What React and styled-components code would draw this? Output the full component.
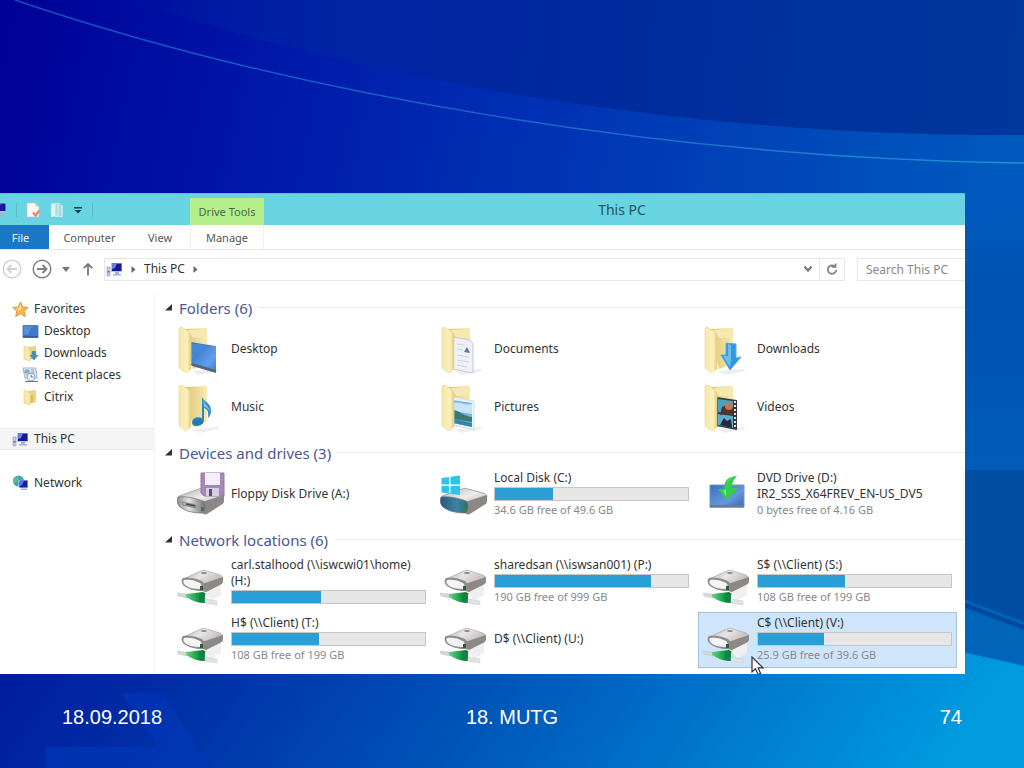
import React from 'react';
import styled, { createGlobalStyle, css } from 'styled-components';

const GlobalStyle = createGlobalStyle`
  * {
    box-sizing: border-box;
  }
  body {
    margin: 0;
    background: #0038b0;
  }
  button, input {
    font: inherit;
    color: inherit;
  }
`;

const favorites = [
  { name: 'Desktop', icon: 'desktop' },
  { name: 'Downloads', icon: 'downloads' },
  { name: 'Recent places', icon: 'recent' },
  { name: 'Citrix', icon: 'folder' },
];

const groups = [
  {
    title: 'Folders (6)',
    items: [
      { name: 'Desktop', icon: 'desktop' },
      { name: 'Documents', icon: 'documents' },
      { name: 'Downloads', icon: 'downloads' },
      { name: 'Music', icon: 'music' },
      { name: 'Pictures', icon: 'pictures' },
      { name: 'Videos', icon: 'videos' },
    ],
  },
  {
    title: 'Devices and drives (3)',
    items: [
      { name: 'Floppy Disk Drive (A:)', icon: 'floppy' },
      { name: 'Local Disk (C:)', icon: 'local', used: 30, free: '34.6 GB free of 49.6 GB' },
      { name: 'DVD Drive (D:)', icon: 'dvd', second: 'IR2_SSS_X64FREV_EN-US_DV5', free: '0 bytes free of 4.16 GB' },
    ],
  },
  {
    title: 'Network locations (6)',
    items: [
      { name: 'carl.stalhood (\\\\iswcwi01\\home)', second: '(H:)', icon: 'network', used: 46 },
      { name: 'sharedsan (\\\\iswsan001) (P:)', icon: 'network', used: 81, free: '190 GB free of 999 GB' },
      { name: 'S$ (\\\\Client) (S:)', icon: 'network', used: 45, free: '108 GB free of 199 GB' },
      { name: 'H$ (\\\\Client) (T:)', icon: 'network', used: 45, free: '108 GB free of 199 GB' },
      { name: 'D$ (\\\\Client) (U:)', icon: 'network' },
      { name: 'C$ (\\\\Client) (V:)', icon: 'network', used: 34, free: '25.9 GB free of 39.6 GB', selected: true },
    ],
  },
];

export default function App() {
  return (
    <Slide>
      <GlobalStyle />
      <Backdrop />
      <Explorer>
        <TitleBar>
          <QuickAccess>
            <PcIcon />
            <Divider />
            <QuickButton aria-label="Properties">
              <PageIcon />
            </QuickButton>
            <QuickButton aria-label="New folder">
              <NewFolderIcon />
            </QuickButton>
            <QuickButton aria-label="Customize toolbar">
              <svg width="10" height="10" viewBox="0 0 10 10">
                <path d="M1 2h8v1.4H1zM1.5 5h7L5 8.6z" fill="#1c3c44" />
              </svg>
            </QuickButton>
            <Divider />
          </QuickAccess>
          <ToolsLabel>Drive Tools</ToolsLabel>
          <WindowTitle>This PC</WindowTitle>
        </TitleBar>
        <Ribbon>
          <FileTab>File</FileTab>
          <Tab $width={81}>Computer</Tab>
          <Tab $width={60}>View</Tab>
          <ToolTab>Manage</ToolTab>
        </Ribbon>
        <AddressRow>
          <NavButton aria-label="Back" disabled>
            <ArrowCircle color="#d2d2d2" flip />
          </NavButton>
          <NavButton aria-label="Forward">
            <ArrowCircle color="#808080" />
          </NavButton>
          <NavButton aria-label="Recent locations">
            <svg width="8" height="5" viewBox="0 0 8 5">
              <path d="M0 0h8L4 5z" fill="#777" />
            </svg>
          </NavButton>
          <NavButton aria-label="Up">
            <svg width="14" height="14" viewBox="0 0 14 14" fill="none" stroke="#777" strokeWidth="1.8">
              <path d="M8 13.500V2M3.800 6.200L8 2l4.200 4.200" />
            </svg>
          </NavButton>
          <AddressBox>
            <PcIcon />
            <Chevron />
            <Crumb href="#this-pc">This PC</Crumb>
            <Chevron />
            <AddressButton aria-label="Previous locations" $push>
              <svg width="10" height="8" viewBox="0 0 10 8" fill="none" stroke="#777" strokeWidth="2.200">
                <path d="M1.500 1.500L5 5.500l3.500-4" />
              </svg>
            </AddressButton>
            <AddressButton aria-label="Refresh" $line>
              <svg width="12" height="13" viewBox="0 0 12 13" fill="none" stroke="#888" strokeWidth="1.900">
                <path d="M8.500 3.200A4.200 4.200 0 1 0 10.200 7" />
                <path d="M5.500 3.800h4V.500" />
              </svg>
            </AddressButton>
          </AddressBox>
          <Search type="search" aria-label="Search This PC" placeholder="Search This PC" />
        </AddressRow>
        <Body>
          <Sidebar>
            <SideLink href="#favorites">
              <StarIcon />
              Favorites
            </SideLink>
            {favorites.map((item) => (
              <SideLink key={item.name} href="#favorites" $child>
                <SmallIcon name={item.icon} />
                {item.name}
              </SideLink>
            ))}
            <SideLink href="#this-pc" $current>
              <PcIcon />
              This PC
            </SideLink>
            <SideLink href="#network">
              <GlobeIcon />
              Network
            </SideLink>
          </Sidebar>
          <Content>
            {groups.map((group) => (
              <section key={group.title}>
                <GroupTitle>
                  <svg width="7" height="7" viewBox="0 0 7 7">
                    <path d="M7 0v6.500H0z" fill="#333" />
                  </svg>
                  {group.title}
                </GroupTitle>
                <Tiles>
                  {group.items.map((item) => (
                    <DriveTile key={item.name} item={item} />
                  ))}
                </Tiles>
              </section>
            ))}
          </Content>
        </Body>
      </Explorer>
      <Footer>
        <span>18.09.2018</span>
        <span>18. MUTG</span>
        <span>74</span>
      </Footer>
    </Slide>
  );
}

function DriveTile({ item }) {
  return (
    <Tile $selected={item.selected}>
      <TileIcon name={item.icon} />
      <TileText>
        <TileLine>{item.name}</TileLine>
        {item.second && <TileLine>{item.second}</TileLine>}
        {item.used && (
          <Meter role="progressbar" aria-label="Space used" aria-valuenow={item.used}>
            <MeterFill style={{ width: `${item.used}%` }} />
          </Meter>
        )}
        {item.free && <TileLine $muted>{item.free}</TileLine>}
      </TileText>
      {item.selected && (
        <Pointer width="14" height="20" viewBox="0 0 14 20">
          <path d="M1 1v15l3.500-3.200L7 18.500l2.600-1.100-2.500-5.600H12z" fill="#fff" stroke="#333" strokeWidth="1.200" />
        </Pointer>
      )}
    </Tile>
  );
}

function Backdrop() {
  return (
    <BackdropSvg viewBox="0 0 1024 768" preserveAspectRatio="none" aria-hidden="true">
      <defs>
        <linearGradient id="base" x1="0" y1="0" x2="1" y2="0.150">
          <stop offset="0" stopColor="#000096" />
          <stop offset="0.250" stopColor="#0016a8" />
          <stop offset="0.550" stopColor="#0032b4" />
          <stop offset="1" stopColor="#005abe" />
        </linearGradient>
        <linearGradient id="shade" gradientUnits="userSpaceOnUse" x1="130" y1="0" x2="1024" y2="60">
          <stop offset="0" stopColor="#0028a0" stopOpacity="0" />
          <stop offset="0.300" stopColor="#0024a2" />
          <stop offset="0.600" stopColor="#002c9c" />
          <stop offset="1" stopColor="#00389c" />
        </linearGradient>
        <linearGradient id="floor" x1="0" y1="0" x2="1" y2="0.080">
          <stop offset="0" stopColor="#001b9e" />
          <stop offset="0.200" stopColor="#002ea6" />
          <stop offset="0.500" stopColor="#0054b8" />
          <stop offset="0.750" stopColor="#0078cc" />
          <stop offset="1" stopColor="#009ce0" />
        </linearGradient>
        <linearGradient id="line" x1="0" y1="0" x2="1" y2="0">
          <stop offset="0" stopColor="#1450c0" />
          <stop offset="0.600" stopColor="#1c6cca" />
          <stop offset="1" stopColor="#1c94d0" />
        </linearGradient>
        <linearGradient id="edge" x1="0" y1="0" x2="0" y2="1">
          <stop offset="0" stopColor="#005abc" />
          <stop offset="0.300" stopColor="#0052b0" />
          <stop offset="1" stopColor="#005cb8" />
        </linearGradient>
      </defs>
      <path d="M0 0h1024v768H0z" fill="url(#base)" />
      <path d="M130 0C350 75 680 138 1024 135V0z" fill="url(#shade)" />
      <path d="M15 0C280 90 650 158 1024 163" fill="none" stroke="url(#line)" strokeWidth="1.500" />
      <path d="M950 216h74v254h-74z" fill="url(#edge)" />
      <path d="M950 470h74v170h-74z" fill="#004da4" />
      <path d="M950 594l74 28v60h-74z" fill="#0064b8" />
      <path d="M950 597l74 28v5l-74-28z" fill="#0047a0" />
      <path d="M0 665h850l100-16 74 17v102H0z" fill="url(#floor)" />
      <path d="M121 693h42l47 75H46v-21h113z" fill="#0036b8" opacity="0.700" />
    </BackdropSvg>
  );
}

function ArrowCircle({ color, flip }) {
  return (
    <svg width="20" height="20" viewBox="0 0 20 20" fill="none" stroke={color}>
      <circle cx="10" cy="10" r="8.800" strokeWidth="1.500" />
      <path
        d={flip ? 'M15 10H6M9.500 6L5.500 10l4 4' : 'M5 10h9M10.500 6l4 4-4 4'}
        strokeWidth="2"
      />
    </svg>
  );
}

function Chevron() {
  return (
    <svg width="5" height="7" viewBox="0 0 5 7">
      <path d="M0.500 0v7L4.500 3.500z" fill="#666" />
    </svg>
  );
}

function PcIcon() {
  return (
    <svg width="17" height="15" viewBox="0 0 17 15">
      <path d="M1 5h3v9H1z" fill="#c3cce0" stroke="#8c98b8" strokeWidth="0.600" />
      <path d="M1.500 9h2v1.500h-2z" fill="#5b6c98" />
      <path d="M5 1h11v9H5z" fill="#b9c3e4" />
      <path d="M6 1.500h9.500V9H6z" fill="#17189c" />
      <path d="M6 1.500h5L9 6 6 7z" fill="#6d82dc" />
      <path d="M9 10h4v2h2v1.500H7V12h2z" fill="#a3b4d4" />
    </svg>
  );
}

function PageIcon() {
  return (
    <svg width="15" height="16" viewBox="0 0 15 16">
      <path d="M1 1h8l4 4v10H1z" fill="#fcf7f4" stroke="#b9c6c8" strokeWidth="0.700" />
      <path d="M9 1v4h4" fill="#d8dde0" />
      <path d="M7 10.500l2.500 3 4-5" fill="none" stroke="#e08c72" strokeWidth="2.500" />
    </svg>
  );
}

function NewFolderIcon() {
  return (
    <svg width="14" height="16" viewBox="0 0 14 16">
      <path d="M1 2l5-1v13l-5 1z" fill="#e3f3f4" />
      <path d="M6 1h4l3 3v11H4l2-2z" fill="#bfe6ea" />
      <path d="M6 2v11M10 2v12" stroke="#94cbd3" />
    </svg>
  );
}

function StarIcon() {
  return (
    <svg width="17" height="17" viewBox="0 0 17 17">
      <path
        d="M8.500 1l2.200 5 5.400.500-4 3.600 1.200 5.400-4.800-2.800-4.800 2.800 1.200-5.400-4-3.600 5.400-.500z"
        fill="#f8b84a"
        stroke="#e4943a"
      />
      <path d="M8.500 3l1 4-4 4 .500-3L4 7.500l3-.500z" fill="#fde09a" />
    </svg>
  );
}

function GlobeIcon() {
  return (
    <svg width="17" height="16" viewBox="0 0 17 16">
      <circle cx="6.500" cy="6" r="5.500" fill="#3a9ed0" />
      <path d="M2 3l4-2 1 3-3 4-3-1zM7 8l3-5 1.500 3L9 10z" fill="#5dc07a" />
      <path d="M6.500 5H16v8H6.500z" fill="#d3dcf0" />
      <path d="M7.500 5.500h8v7h-8z" fill="#171ea4" />
      <path d="M8 6h4l-2 4-2 1z" fill="#5578dc" />
      <path d="M9 13.500h6V15H9z" fill="#9eb0d0" />
    </svg>
  );
}

function SmallIcon({ name }) {
  if (name === 'desktop') {
    return (
      <svg width="17" height="15" viewBox="0 0 17 15">
        <path d="M1 1.500h15v12H1z" fill="#3c78cc" stroke="#5a80b8" />
        <path d="M2 2.500h8l-4 8H2z" fill="#5492dc" />
        <path d="M1 12h15v1.500H1z" fill="#345c94" />
      </svg>
    );
  }
  if (name === 'recent') {
    return (
      <svg width="17" height="16" viewBox="0 0 17 16">
        <path d="M1 1h13l1 10H3z" fill="#e1e9f0" stroke="#a3b5c7" />
        <path d="M3 3h4v3H3zM9 3h3M9 5h4M4 8h3" fill="#84aaca" stroke="#84a5c4" />
        <circle cx="9" cy="10" r="4" fill="#edf3f8" stroke="#8ca3ba" />
        <path d="M9 7.500V10h2.500M3 14.500h13" fill="none" stroke="#657e98" />
      </svg>
    );
  }
  return (
    <svg width="17" height="16" viewBox="0 0 17 16">
      <path d="M5 2l9-1v12l-8 2z" fill="#ecd380" />
      <path d="M2 1l6 3v12l-6-2z" fill="#f8e9a6" stroke="#e0cb80" strokeWidth="0.600" />
      <path d="M9 7l2-1v7l-2 1z" fill="#d9b955" />
      {name === 'downloads' && <path d="M10 6h4v4h2.500L12 15.500 7.500 10H10z" fill="#488fb4" />}
    </svg>
  );
}

function TileIcon({ name }) {
  if (name === 'network') {
    return <NetworkDriveIcon />;
  }
  if (name === 'floppy' || name === 'local') {
    return <DiskDriveIcon name={name} />;
  }
  if (name === 'dvd') {
    return (
      <svg width="50" height="48" viewBox="0 0 50 48">
        <defs>
          <linearGradient id="dvdScreen" x1="0" y1="0" x2="1" y2="1">
            <stop offset="0" stopColor="#3573c4" />
            <stop offset="0.600" stopColor="#6496dc" />
            <stop offset="1" stopColor="#3c69ae" />
          </linearGradient>
        </defs>
        <path d="M7 14h34v22H7z" fill="url(#dvdScreen)" stroke="#7893ba" />
        <path d="M7 34h34v2.500H7z" fill="#647a98" />
        <path d="M34 5c-9 0-13 5-13 13h-6l9 11 11-12h-6c0-6 2-9 5-12z" fill="#35cc50" />
        <path d="M33 5c-7 1-10 6-10 13l-3 2 3 5v-7c0-7 4-11 10-13z" fill="#82ec88" />
      </svg>
    );
  }
  return (
    <svg width="50" height="50" viewBox="0 0 50 50">
      <defs>
        <linearGradient id="flap" x1="0" y1="0" x2="1" y2="0">
          <stop offset="0" stopColor="#f6e8aa" />
          <stop offset="0.700" stopColor="#fbefba" />
          <stop offset="1" stopColor="#dfc979" />
        </linearGradient>
        <linearGradient id="rear" x1="0" y1="0" x2="1" y2="0">
          <stop offset="0" stopColor="#dbc374" />
          <stop offset="1" stopColor="#f8eab2" />
        </linearGradient>
        <linearGradient id="glass" x1="0" y1="0" x2="1" y2="1">
          <stop offset="0" stopColor="#2766b8" />
          <stop offset="0.700" stopColor="#62a0ec" />
          <stop offset="1" stopColor="#3e7ccc" />
        </linearGradient>
      </defs>
      <path d="M15 46l25-2 3 2-22 4z" fill="#eee" />
      <path d="M7 4l23-1v36l-14 5z" fill="url(#rear)" />
      {name !== 'music' && <path d="M11 5l18-1v9H16z" fill="#f6e9b0" />}
      <FolderArt name={name} />
      <path d="M2 3c1-1 3-1 4 0l6 4c1 1 2 2 2 4v33l-5 4-7-5z" fill="url(#flap)" stroke="#e8d796" strokeWidth="0.700" />
    </svg>
  );
}

function FolderArt({ name }) {
  switch (name) {
    case 'desktop':
      return (
        <>
          <path d="M13 17l26 4v26l-26-10z" fill="url(#glass)" />
          <path d="M14 18l19 3-19 13z" fill="#4686d6" />
          <path d="M12 37l27 8v3l-27-8z" fill="#50657c" />
        </>
      );
    case 'documents':
      return (
        <>
          <path d="M13 12l17 3 3 4v29l-20-4z" fill="#f0f1f8" stroke="#c3c7dc" />
          <path d="M17 19l7 1M17 24l6 1M17 30l12 2M17 35l12 2M17 40l10 2" stroke="#ccd3e2" />
          <path d="M24 27l3-5 3 6z" fill="#557c90" />
        </>
      );
    case 'downloads':
      return (
        <>
          <path d="M23 18l10 1v14l5-1-11 13-9-15h5z" fill="#3398e0" stroke="#57a8dc" />
          <path d="M25 19l3 1v14l-1 8-7-11h5z" fill="#6cbcf0" />
        </>
      );
    case 'music':
      return (
        <>
          <path d="M25 14c2 5 9 6 9 13 0 4-1 6-3 8 1-7-1-9-4-10v12c0 7-12 8-12 3 0-5 5-7 10-5z" fill="#2c8ac2" />
          <path d="M26 16c2 6 7 8 7 13-2-4-4-5-6-5z" fill="#78c0e8" />
          <ellipse cx="21" cy="39" rx="5" ry="3" fill="#2879ac" />
        </>
      );
    case 'pictures':
      return (
        <>
          <path d="M13 14l21 4v29l-21-5z" fill="#eaf5fc" stroke="#d0e0ea" />
          <path d="M13 17l19 3v24l-19-4z" fill="#76b6ec" />
          <path d="M13 20c8-2 12 3 19 1v10l-19-3z" fill="#c6e4fa" />
          <path d="M13 27c8 1 12 7 19 7v5l-19-3z" fill="#3a7a72" />
          <path d="M13 36l19 4v4l-19-4z" fill="#3586ae" />
        </>
      );
    case 'videos':
      return (
        <>
          <path d="M13 14l21 3v30l-21-4z" fill="#35383c" />
          <path d="M15 16l15 2v13l-15-2z" fill="#4d9fbe" />
          <path d="M15 31l15 2v12l-15-3z" fill="#5badd0" />
          <path d="M19 24l7-3 4 4v8l-5-3-8 2z" fill="#5a3028" />
          <circle cx="26" cy="23" r="4" fill="#b47c5c" />
          <path d="M17 42l4-7 3 3 4-2 1 9z" fill="#252a38" />
          <path d="M32 18v28" stroke="#dce3e4" strokeWidth="2" strokeDasharray="2 2" />
        </>
      );
    default:
      return null;
  }
}

function NetworkDriveIcon() {
  return (
    <svg width="50" height="50" viewBox="0 0 50 50">
      <defs>
        <linearGradient id="netTop" x1="0" y1="0" x2="1" y2="0.500">
          <stop offset="0" stopColor="#aca8a6" />
          <stop offset="0.500" stopColor="#e8e6e5" />
          <stop offset="1" stopColor="#c0bcba" />
        </linearGradient>
        <linearGradient id="cable" x1="0" y1="0" x2="1" y2="0">
          <stop offset="0" stopColor="#6ed084" />
          <stop offset="0.500" stopColor="#1ca850" />
          <stop offset="1" stopColor="#0b5c30" />
        </linearGradient>
      </defs>
      <path d="M28 35l16-8v11l-10 6z" fill="#efefef" />
      <path d="M6 22l18-8c2-1 4-1 6 0l13 4c2 1 3 2 2 4L27 28z" fill="url(#netTop)" stroke="#aaa" strokeWidth="0.700" />
      <path d="M25 27l21-7v4c0 2-1 3-3 4L29 35l-4-1z" fill="#8c8886" />
      <path d="M6 21c7-1 13 0 19 3 3 2 4 9 0 10-7 0-14-2-18-5-3-3-3-6-1-8z" fill="#8e8c8b" />
      <path d="M7 23c5-1 11 0 16 3 2 1 2 6 0 6-6 0-11-1-15-4-2-2-2-4-1-5z" fill="#f4f4f4" />
      <ellipse cx="27" cy="16" rx="3" ry="1" fill="#888" />
      <path d="M23 29h3v4h-3z" fill="#2e5c38" />
      <path d="M0 36l9 1 1 4-9-2z" fill="#d3d9d6" stroke="#bfc4c2" strokeWidth="0.500" />
      <path d="M9 37l17-2 3 2-5 3 4 2v4c-8 0-14-3-19-6z" fill="url(#cable)" />
      <path d="M22 37h6v9l-6-1z" fill="#118445" />
      <path d="M28 42l12 2v4l-12-2z" fill="#e2e2e2" stroke="#c8c8c8" strokeWidth="0.500" />
    </svg>
  );
}

function DiskDriveIcon({ name }) {
  return (
    <svg width="50" height="50" viewBox="0 0 50 50">
      <defs>
        <linearGradient id="driveTop" x1="0" y1="0" x2="1" y2="1">
          <stop offset="0" stopColor="#b4b2b0" />
          <stop offset="0.500" stopColor="#eeedec" />
          <stop offset="1" stopColor="#aaa6a4" />
        </linearGradient>
        <linearGradient id="driveFront" x1="0" y1="0" x2="1" y2="0">
          <stop offset="0" stopColor="#8b8b8b" />
          <stop offset="0.400" stopColor="#e2e2e2" />
          <stop offset="1" stopColor="#707070" />
        </linearGradient>
        <linearGradient id="driveBlue" x1="0" y1="0" x2="1" y2="0">
          <stop offset="0" stopColor="#255b84" />
          <stop offset="0.600" stopColor="#3c84a4" />
          <stop offset="1" stopColor="#287060" />
        </linearGradient>
      </defs>
      <path d="M2 26l20-7c2-1 4-1 6 0l15 4c3 1 4 2 4 4L28 36 6 33z" fill="url(#driveTop)" stroke="#9b9794" strokeWidth="0.800" />
      <path d="M25 32l22-7v6c0 2-1 3-3 4L30 44c-2 1-4 0-5-1z" fill="#8c8784" />
      <path
        d="M1 27c7-1 17 1 25 4 3 1 3 11-1 12-9 0-18-2-23-7-2-3-2-6-1-9z"
        fill={name === 'local' ? 'url(#driveBlue)' : 'url(#driveFront)'}
        stroke="#777"
        strokeWidth="0.800"
      />
      {name === 'floppy' && (
        <>
          <path d="M5 32l14 3v3L6 35z" fill="#b8b8b8" stroke="#777" strokeWidth="0.800" />
          <path d="M9 34l9 2" stroke="#444" strokeWidth="1.500" />
          <path d="M24 3h23v23H27l-3-3z" fill="#a488b8" stroke="#9478ac" />
          <path d="M28 3h15v12H28z" fill="#f4eff6" />
          <path d="M29 18h13v8H29z" fill="#d7cce0" />
          <path d="M32 19h3v7h-3z" fill="#68497a" />
        </>
      )}
      {name === 'local' && (
        <path d="M1.500 8l7.500-1v7.500H1.500zM10.500 6.800L20 5.500v9h-9.500zM1.500 16H9v7.500l-7.500-1zM10.500 16H20v9l-9.500-1.300z" fill="#2cc4ea" />
      )}
      <path d="M24 37h3v4h-3z" fill="#427852" />
    </svg>
  );
}

const Slide = styled.div`
  position: relative;
  z-index: 0;
  min-height: 100vh;
  padding-top: 193px;
  display: flex;
  flex-direction: column;
  overflow: hidden;
`;

const BackdropSvg = styled.svg`
  position: absolute;
  inset: 0;
  width: 100%;
  height: 100%;
  z-index: -1;
`;

const Explorer = styled.main`
  margin-right: 59px;
  overflow: hidden;
  background: #fff;
  color: #333;
  font-family: 'Noto Sans', 'Open Sans', sans-serif;
  font-size: 12px;
  line-height: 16px;
`;

const TitleBar = styled.header`
  display: flex;
  height: 32px;
  background: #68d3e1;
  border-top: 1px solid #5cc0da;
`;

const QuickAccess = styled.div`
  flex: 0 0 190px;
  display: flex;
  align-items: center;
  gap: 9px;

  > svg {
    margin-left: -10px;
    flex: none;
  }
`;

const QuickButton = styled.button`
  display: flex;
  padding: 0;
  border: 0;
  background: none;
`;

const Divider = styled.span`
  width: 1px;
  height: 14px;
  background: #59b9c8;
`;

const ToolsLabel = styled.div`
  flex: 0 0 74px;
  margin-top: 4px;
  padding-top: 6px;
  background: #b7ee8c;
  color: #456b48;
  font-size: 11px;
  text-align: center;
`;

const WindowTitle = styled.h1`
  flex: 1;
  margin: 0 -15px 0 0;
  color: #24565f;
  font-size: 14px;
  font-weight: 400;
  line-height: 31px;
  text-align: center;
`;

const Ribbon = styled.div`
  display: flex;
  height: 25px;
  border-bottom: 1px solid #e8e8e8;
`;

const Tab = styled.button`
  width: ${(props) => props.$width}px;
  padding: 2px 0 0;
  border: 0;
  background: none;
  color: #555;
  font-size: 11px;
`;

const FileTab = styled(Tab)`
  width: 49px;
  padding-right: 8px;
  background: #1977c6;
  color: #e4f6ff;
`;

const ToolTab = styled(Tab)`
  width: 74px;
  border: solid #eef3ea;
  border-width: 0 1px;
`;

const AddressRow = styled.div`
  display: flex;
  align-items: center;
  height: 42px;
  padding: 0 0 4px 2px;
`;

const NavButton = styled.button`
  display: flex;
  margin-right: 10px;
  padding: 0;
  border: 0;
  background: none;
`;

const AddressBox = styled.nav`
  flex: 1;
  display: flex;
  align-items: center;
  gap: 8px;
  height: 23px;
  padding-left: 1px;
  border: 1px solid #e6e6e6;
`;

const Crumb = styled.a`
  color: #333;
  text-decoration: none;
`;

const AddressButton = styled.button`
  display: flex;
  align-items: center;
  align-self: stretch;
  padding: 0 6px;
  margin-left: ${(props) => (props.$push ? 'auto' : '-8px')};
  border: 0;
  border-left: ${(props) => (props.$line ? '1px solid #e6e6e6' : '0')};
  background: none;
`;

const Search = styled.input`
  width: 108px;
  height: 23px;
  margin-left: 12px;
  padding: 0 0 0 8px;
  border: 1px solid #e6e6e6;
  border-right: 0;
  background: #fff;
  outline: none;

  &::placeholder {
    color: #888;
    opacity: 1;
  }
`;

const Body = styled.div`
  display: flex;
`;

const Sidebar = styled.nav`
  flex: 0 0 155px;
  padding-top: 6px;
  border-right: 1px solid #f5f5f5;
`;

const SideLink = styled.a`
  display: flex;
  align-items: center;
  gap: 5px;
  height: 22px;
  padding-left: ${(props) => (props.$child ? 22 : 12)}px;
  color: #333;
  text-decoration: none;
  white-space: nowrap;

  ${(props) =>
    props.$current &&
    css`
      margin: 20px 0 22px;
      background: #f5f5f5;
      border: solid #ececec;
      border-width: 1px 0;
    `}
`;

const Content = styled.div`
  flex: 1;
  min-width: 0;
  padding: 0 0 5px 17px;
`;

const GroupTitle = styled.h2`
  display: flex;
  align-items: center;
  gap: 7px;
  height: 29px;
  margin: 0 0 0 -7px;
  padding-top: 2px;
  color: #4a5698;
  font-size: 15px;
  font-weight: 400;

  &::after {
    content: '';
    flex: 1;
    height: 1px;
    background: #ebebeb;
  }
`;

const Tiles = styled.div`
  display: grid;
  grid-template-columns: repeat(3, 1fr);
  column-gap: 4px;
  margin-right: 8px;
`;

const Tile = styled.button`
  position: relative;
  display: flex;
  align-items: center;
  gap: 4px;
  min-width: 0;
  height: 58px;
  padding: 0 4px;
  border: 1px solid transparent;
  background: none;
  text-align: left;

  > svg {
    flex: none;
  }

  ${(props) =>
    props.$selected &&
    css`
      height: 56px;
      align-self: center;
      background: #cfe5fb;
      border-color: #a3c3de;
    `}
`;

const TileText = styled.div`
  flex: 1;
  min-width: 0;
  padding-bottom: 2px;
`;

const TileLine = styled.div`
  color: ${(props) => (props.$muted ? '#888' : '#333')};
  font-size: ${(props) => (props.$muted ? 11 : 12)}px;
  white-space: nowrap;
`;

const Meter = styled.div`
  max-width: 196px;
  height: 14px;
  margin: 1px 0;
  border: 1px solid #c6c6c6;
  background: #e6e6e6;
`;

const MeterFill = styled.div`
  height: 100%;
  background: #2b9fd5;
`;

const Pointer = styled.svg`
  position: absolute;
  left: 52px;
  top: 43px;
`;

const Footer = styled.footer`
  flex: 1;
  display: grid;
  grid-template-columns: 1fr 1fr 1fr;
  align-items: center;
  min-height: 94px;
  padding: 0 62px 8px;
  color: #fff;
  font-family: 'Liberation Sans', Arial, sans-serif;
  font-size: 20px;

  > :nth-child(2) {
    text-align: center;
  }
  > :last-child {
    text-align: right;
  }
`;
